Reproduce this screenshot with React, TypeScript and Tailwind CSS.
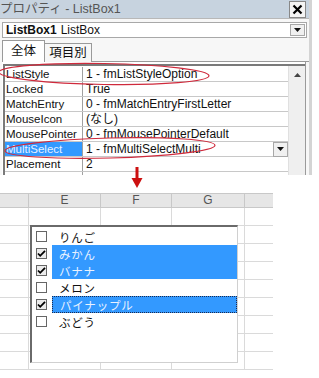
import React from "react";

const props = [
    { name: "ListStyle", value: "1 - fmListStyleOption" },
    { name: "Locked", value: "True" },
    { name: "MatchEntry", value: "0 - fmMatchEntryFirstLetter" },
    { name: "MouseIcon", value: "(なし)" },
    { name: "MousePointer", value: "0 - fmMousePointerDefault" },
    { name: "MultiSelect", value: "1 - fmMultiSelectMulti", selected: true },
    { name: "Placement", value: "2" },
];

const items = [
    { label: "りんご", checked: false },
    { label: "みかん", checked: true },
    { label: "バナナ", checked: true },
    { label: "メロン", checked: false },
    { label: "パイナップル", checked: true, focus: true },
    { label: "ぶどう", checked: false },
];

const font = { fontFamily: '"Liberation Sans", "Noto Sans CJK JP", sans-serif' };

const DropButton = ({ className }: { className: string }) => (
    <div className={`flex items-center justify-center border border-[#a8a8a8] bg-[#f0f0f0] ${className}`}>
        <svg width="7" height="4" viewBox="0 0 7 4">
            <path d="M0 0h7L3.5 4z" fill="#111" />
        </svg>
    </div>
);

const CheckBox = ({ checked }: { checked: boolean }) => (
    <div className={`flex h-[11px] w-[11px] shrink-0 items-center justify-center border border-[#666] ${checked ? "bg-[#ececec]" : "bg-white"}`}>
        {checked && (
            <svg width="9" height="9" viewBox="0 0 9 9">
                <path d="M1 4.5l2.2 2.3L8 1.8" fill="none" stroke="#000" strokeWidth="1.8" />
            </svg>
        )}
    </div>
);

export default function App() {
    return (
        <div className="relative h-[378px] w-[319px] overflow-hidden bg-white text-[#111]" style={font}>
            {/* Properties window */}
            <div className="flex h-[175px] w-[312px] flex-col border-r-[3px] border-[#d4d4d4] bg-[#f7f7f7]">
                <div className="flex h-[18px] shrink-0 items-center justify-between bg-[#c7d3df] pr-[3px]">
                    <span className="text-[12.5px] leading-none text-[#555]">プロパティ - ListBox1</span>
                    <div className="flex h-[17px] w-[17px] items-center justify-center border border-[#888] bg-[#f4f4f4]">
                        <svg width="11" height="11" viewBox="0 0 11 11">
                            <path d="M1.5 1.5l8 8M9.5 1.5l-8 8" stroke="#000" strokeWidth="2.2" />
                        </svg>
                    </div>
                </div>
                <div className="h-[1px] shrink-0 bg-[#b8b8b8]" />
                <div className="mx-[2px] mt-[3px] flex h-[16px] shrink-0 items-center border border-[#a8a8a8] bg-white pl-[3px] pr-[1px]">
                    <span className="text-[12px] font-bold leading-none">ListBox1</span>
                    <span className="ml-[4px] text-[12px] leading-none">ListBox</span>
                    <DropButton className="ml-auto h-[12px] w-[15px]" />
                </div>
                <div className="mt-[2px] flex h-[22px] shrink-0 items-end pl-[2px]">
                    <div className="flex h-[22px] w-[43px] items-center justify-center border border-b-0 border-[#9a9a9a] bg-white text-[12.5px] leading-none">全体</div>
                    <div className="flex h-[19px] w-[47px] items-center justify-center border-r border-t border-[#9a9a9a] bg-[#f7f7f7] text-[12.5px] leading-none">項目別</div>
                    <div className="h-[1px] flex-1 self-end bg-[#9a9a9a]" />
                </div>
                <div className="ml-[2px] mr-[3px] flex min-h-0 flex-1 border-r border-[#9a9a9a] bg-white pl-[1px] pt-[2px]">
                    <div className="flex flex-1 overflow-hidden border-l-2 border-t-2 border-[#7a7a7a]">
                        <div className="flex flex-1 flex-col">
                            <div className="h-[1px] shrink-0" />
                            {props.map((p) => (
                                <div key={p.name} className="flex h-[15px] shrink-0 border-b border-[#c8c8c8] leading-[14px]">
                                    <div className={`w-[78px] shrink-0 overflow-hidden whitespace-nowrap border-r border-[#a0a0a0] pl-[1px] text-[11.5px] ${p.selected ? "bg-[#3399ff] text-[#e6f0ff]" : ""}`}>
                                        {p.name}
                                    </div>
                                    <div className="flex flex-1 items-center whitespace-nowrap pl-[3px] text-[12px]">
                                        <span>{p.value}</span>
                                        {p.selected && <DropButton className="ml-auto h-[15px] w-[15px]" />}
                                    </div>
                                </div>
                            ))}
                            <div className="flex flex-1">
                                <div className="w-[78px] border-r border-[#a0a0a0]" />
                            </div>
                        </div>
                        <div className="flex w-[17px] shrink-0 flex-col items-center border-l border-[#e0e0e0] bg-[#efefef] pt-[7px]">
                            <svg width="7" height="4" viewBox="0 0 7 4">
                                <path d="M3.5 0L7 4H0z" fill="#444" />
                            </svg>
                        </div>
                    </div>
                </div>
            </div>

            {/* Gap below the window */}
            <div className="h-[18px]" />

            {/* Spreadsheet */}
            <div className="w-[273px]">
                <div className="flex h-[15px] border-y border-[#c8c8c8] bg-[#e6e6e6] text-[12px] leading-[13px] text-[#555]">
                    <div className="w-[29px] border-r border-[#c8c8c8]" />
                    <div className="w-[72px] border-r border-[#c8c8c8] text-center">E</div>
                    <div className="w-[71px] border-r border-[#c8c8c8] text-center">F</div>
                    <div className="w-[73px] border-r border-[#c8c8c8] text-center">G</div>
                    <div className="flex-1" />
                </div>
                {Array.from({ length: 9 }).map((_, i) => (
                    <div key={i} className="flex h-[18px] border-b border-[#dadada]">
                        <div className="w-[29px] border-r border-[#dadada]" />
                        <div className="w-[72px] border-r border-[#dadada]" />
                        <div className="w-[71px] border-r border-[#dadada]" />
                        <div className="w-[73px] border-r border-[#dadada]" />
                        <div className="flex-1" />
                    </div>
                ))}
            </div>

            {/* Red arrow pointing from the window to the sheet */}
            <svg className="absolute left-[131px] top-[167px]" width="12" height="22" viewBox="0 0 12 22">
                <path d="M6 0v13" stroke="#cc1111" strokeWidth="3" />
                <path d="M0.5 11h11L6 21z" fill="#cc1111" />
            </svg>

            {/* ListBox control over the cells */}
            <div className="absolute left-[30px] top-[225px] flex h-[138px] w-[208px] flex-col border-b border-l-2 border-r border-t-2 border-b-[#d0d0d0] border-l-[#6a6a6a] border-r-[#d0d0d0] border-t-[#6a6a6a] bg-white pt-[1px]">
                {items.map((it) => (
                    <div key={it.label} className="flex h-[17px] shrink-0 items-center overflow-hidden">
                        <div className="flex w-[16px] justify-end pr-[1px]">
                            <CheckBox checked={it.checked} />
                        </div>
                        <div
                            className={`ml-[4px] flex h-[17px] flex-1 items-center overflow-hidden pl-[7px] text-[11.5px] leading-[16px] tracking-[0.8px] ${
                                it.checked ? "bg-[#3399ff] text-[#eaf2ff]" : ""
                            } ${it.focus ? "border border-dotted border-[#1a2a50]" : ""}`}
                            style={{ fontFamily: '"Noto Sans CJK JP", sans-serif' }}
                        >
                            {it.label}
                        </div>
                    </div>
                ))}
            </div>

            {/* Red annotation ellipses */}
            <svg className="pointer-events-none absolute left-0 top-0" width="319" height="378">
                <ellipse cx="104" cy="74" rx="105" ry="10.5" transform="rotate(1 104 74)" fill="none" stroke="#cf2a3c" strokeWidth="1.2" />
                <ellipse cx="110" cy="148" rx="105" ry="10" transform="rotate(-1.5 110 148)" fill="none" stroke="#cf2a3c" strokeWidth="1.2" />
            </svg>
        </div>
    );
}
